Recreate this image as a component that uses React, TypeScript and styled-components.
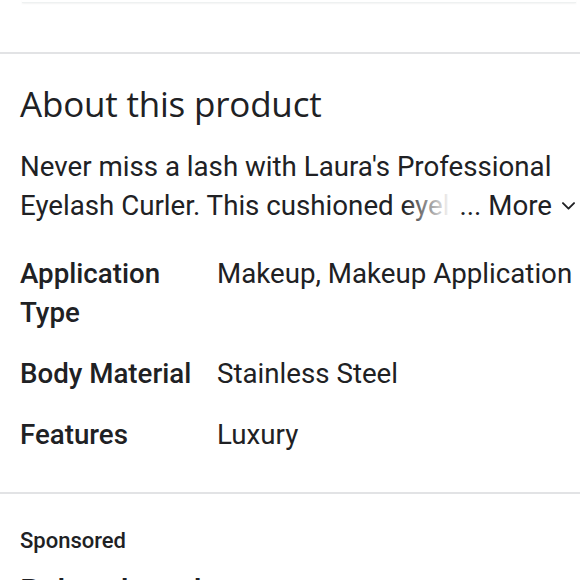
import React from 'react'
import styled, { createGlobalStyle } from 'styled-components'

const GlobalStyle = createGlobalStyle`
  html, body {
    margin: 0;
    padding: 0;
    background: #ffffff;
    overflow: hidden;
  }
  body {
    font-family: Roboto, 'Liberation Sans', Arial, sans-serif;
    color: #202124;
  }
`

interface Spec {
  label: string
  value: string
}

const specs: Spec[] = [
  { label: 'Application Type', value: 'Makeup, Makeup Application' },
  { label: 'Body Material', value: 'Stainless Steel' },
  { label: 'Features', value: 'Luxury' },
]

const Page = styled.div`
  width: 580px;
  height: 580px;
  overflow: hidden;
`

const TopCardEdge = styled.div`
  height: 2px;
  margin: 0 4px 0 22px;
  border-bottom: 1px solid #eef1f1;
  box-shadow: 0 1px 2px rgba(60, 64, 67, 0.06);
`

const Divider = styled.div<{ $top: number }>`
  margin-top: ${p => p.$top}px;
  height: 2px;
  background: #e2e3e5;
`

const Section = styled.section`
  padding: 0 2px 0 20px;
  display: flex;
  flex-direction: column;
`

const Heading = styled.h2`
  margin: 27px 0 0;
  font-family: 'Open Sans', Roboto, sans-serif;
  font-weight: 400;
  font-size: 35px;
  line-height: 46px;
  letter-spacing: -0.2px;
  color: #202124;
`

const Description = styled.div`
  position: relative;
  margin-top: 20px;
  font-size: 27.7px;
  line-height: 39px;
  height: 78px;
  overflow: hidden;
  color: #202124;
`

const MoreButton = styled.button`
  position: absolute;
  right: 0;
  bottom: 0;
  height: 39px;
  display: flex;
  align-items: center;
  gap: 7px;
  padding: 0 0 0 56px;
  border: none;
  background: linear-gradient(to right, rgba(255, 255, 255, 0) 0, #fff 48px);
  font-family: inherit;
  font-size: 27.7px;
  color: #202124;
  cursor: pointer;
`

const SpecList = styled.dl`
  margin: 29px 0 0;
  display: grid;
  grid-template-columns: 197px 1fr;
  row-gap: 22px;
  font-size: 27.7px;
  line-height: 39px;
`

const SpecLabel = styled.dt`
  font-weight: 500;
  padding-right: 8px;
`

const SpecValue = styled.dd`
  margin: 0;
  white-space: nowrap;
`

const SponsoredLabel = styled.div`
  margin-top: 33px;
  font-size: 22px;
  line-height: 28px;
  font-weight: 500;
  color: #202124;
`

const RelatedTitle = styled.div`
  margin-top: 15px;
  font-size: 32px;
  line-height: 40px;
  font-weight: 500;
  color: #202124;
  white-space: nowrap;
`

const Chevron = () => (
  <svg width="19" height="19" viewBox="0 0 24 24" fill="none" stroke="#202124" strokeWidth="2.4" strokeLinecap="round" strokeLinejoin="round">
    <path d="M5 9l7 7 7-7" />
  </svg>
)

export default function App() {
  return (
    <Page>
      <GlobalStyle />
      <TopCardEdge />
      <Divider $top={49} />
      <Section>
        <Heading>About this product</Heading>
        <Description>
          Never miss a lash with Laura's Professional Eyelash Curler. This cushioned eyelash curler gently lifts and curls lashes for a wide-eyed look.
          <MoreButton>
            ... More <Chevron />
          </MoreButton>
        </Description>
        <SpecList>
          {specs.map(s => (
            <React.Fragment key={s.label}>
              <SpecLabel>{s.label}</SpecLabel>
              <SpecValue>{s.value}</SpecValue>
            </React.Fragment>
          ))}
        </SpecList>
      </Section>
      <Divider $top={38} />
      <Section>
        <SponsoredLabel>Sponsored</SponsoredLabel>
        <RelatedTitle>Related products</RelatedTitle>
      </Section>
    </Page>
  )
}
